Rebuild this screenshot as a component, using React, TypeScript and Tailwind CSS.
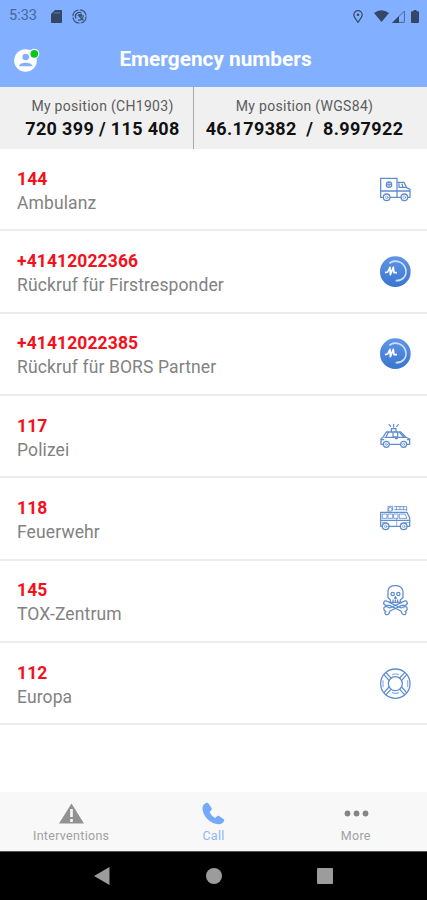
import React from 'react';

// --- Types ---
interface EmergencyNumber {
    number: string;
    label: string;
    icon: React.ReactNode;
}

// --- Icons ---
const lineIcon = {
    className: 'w-8 h-8 shrink-0',
    fill: 'none',
    stroke: '#5f8dd0',
    strokeWidth: 3.8,
    strokeLinejoin: 'round' as const,
    strokeLinecap: 'round' as const,
};

const AmbulanceIcon = () => (
    <svg {...lineIcon} viewBox="27 27 96 96">
        <path d="M40 97H32V40H81V97H61M32 78H120M81 97H94M81 52H102L110 68L120 73V97H113" />
        <path d="M87 56V67H100M96 57L99 67H107" />
        <circle cx="57" cy="59" r="8" />
        <path d="M57 54V64M52 59H62" strokeWidth="3" />
        <circle cx="50" cy="97" r="10" />
        <circle cx="103" cy="97" r="10" />
        <circle cx="50" cy="97" r="4" strokeWidth="2" />
        <circle cx="103" cy="97" r="4" strokeWidth="2" />
    </svg>
);

const CallbackIcon = () => (
    <svg className="w-8 h-8 shrink-0" viewBox="27 34 96 96" fill="none">
        <defs>
            <linearGradient id="callback" x1="0" y1="0" x2="0" y2="1">
                <stop offset="0" stopColor="#6096e4" />
                <stop offset="1" stopColor="#3975d0" />
            </linearGradient>
        </defs>
        <circle cx="76" cy="81" r="46" fill="url(#callback)" />
        <path d="M58 56C75 42 101 51 107 73C112 94 97 109 77 108" stroke="#cfe0fb" strokeWidth="5" />
        <path d="M45 84L53 82L60 68L61 90L70 68L72 84H81" stroke="#fff" strokeWidth="5" strokeLinejoin="round" />
    </svg>
);

const PoliceIcon = () => (
    <svg {...lineIcon} viewBox="27 27 96 96">
        <path d="M38 97H33V80L39 76L49 60H92L107 75L119 81V97H112M59 97H91" />
        <path d="M45 76H107M55 61L48 75M69 61V75H83V61M90 63L101 75" />
        <path d="M64 59V50H78V59M71 45V37M62 43L57 38M80 43L85 38" />
        <path d="M34 83H41M112 83H119M76 80H82" />
        <circle cx="49" cy="97" r="9" />
        <circle cx="101" cy="97" r="9" />
        <circle cx="49" cy="97" r="3" strokeWidth="2" />
        <circle cx="101" cy="97" r="3" strokeWidth="2" />
    </svg>
);

const FireTruckIcon = () => (
    <svg {...lineIcon} viewBox="27 28 96 96">
        <path d="M37 98H32V56H111L119 73V98H112M57 98H91M32 80H120" />
        <path d="M38 61H51V74H38ZM55 61H68V74H55ZM72 61H84V74H72ZM89 61H105L111 74H89Z" strokeWidth="2.5" />
        <path d="M54 55V38H68V50M74 39H109M74 48H109M79 39V48M90 39V48M100 39V48M110 39V51" strokeWidth="2.5" />
        <circle cx="61" cy="47" r="6" strokeWidth="2.5" />
        <path d="M80 75V98M37 87H48M102 87H116" strokeWidth="2" />
        <circle cx="47" cy="98" r="10" />
        <circle cx="101" cy="98" r="10" />
        <circle cx="47" cy="98" r="4" strokeWidth="2" />
        <circle cx="101" cy="98" r="4" strokeWidth="2" />
    </svg>
);

const PoisonIcon = () => (
    <svg {...lineIcon} viewBox="27 32 96 96">
        <path d="M61 76L54 70V50C55 40 63 34 76 34S97 40 99 50V70L91 76V84H61Z" />
        <circle cx="68" cy="59" r="5" />
        <circle cx="85" cy="59" r="5" />
        <path d="M76 67L74 72H79ZM69 77V84M76 77V84M83 77V84" />
        <path d="M53 82C43 74 37 87 45 92C48 95 55 92 58 93L93 110C95 116 98 124 106 120C110 116 108 113 105 111C113 110 114 99 107 97C101 95 98 100 94 101L59 85C58 84 57 81 53 82Z" />
        <path d="M100 82C110 74 116 87 108 92C105 95 98 92 95 93L60 110C58 116 55 124 47 120C43 116 45 113 48 111C40 110 39 99 46 97C52 95 55 100 59 101L94 85C95 84 96 81 100 82Z" />
    </svg>
);

const LifebuoyIcon = () => (
    <svg {...lineIcon} viewBox="27 27 96 96">
        <circle cx="76" cy="74" r="44" />
        <circle cx="76" cy="74" r="21" />
        <path d="M48 41L63 57M42 47L57 64M104 41L89 57M110 47L95 64M48 107L63 91M42 101L57 84M104 107L89 91M110 101L95 84" />
        <path d="M67 47C73 44 80 44 86 47M67 101C73 104 80 104 86 101M39 65V83M113 65V83" stroke="#96b8e8" />
    </svg>
);

const StatusBar = () => (
    <div className="h-8 pl-[9px] pr-[8px] flex items-center text-[#4a6799]">
        <span className="text-[14.5px] leading-none w-[42px]">5:33</span>
        <svg className="w-[11px] h-[13px]" viewBox="0 0 11 13" fill="#344766">
            <path d="M4 0H10Q11 0 11 1V12Q11 13 10 13H1Q0 13 0 12V4Z" />
            <path d="M4 2V4M6 2V4M8 2V4" stroke="#607da9" strokeWidth="1" />
        </svg>
        <svg className="w-[15px] h-[15px] ml-[10px]" viewBox="0 0 15 15" fill="none" stroke="#3c5378">
            <circle cx="7.5" cy="7.5" r="6.6" strokeWidth="1.2" strokeDasharray="9 1.4" />
            <path d="M4 9.5A4 4 0 0 1 9.500 4M11 6A4 4 0 0 1 6 11" strokeWidth="1.3" />
            <path d="M5 6.500L7 5H10V8Z" fill="#3c5378" stroke="none" />
            <path d="M7 7L11.500 11.500" strokeWidth="1.4" />
        </svg>
        <div className="ml-auto flex items-center">
            <svg className="w-[10px] h-[13px]" viewBox="0 0 10 13" fill="none" stroke="#344766" strokeWidth="1.2">
                <path d="M5 12.2C2.5 9 .8 7 .8 4.8A4.2 4.2 0 0 1 9.2 4.8C9.2 7 7.5 9 5 12.2Z" />
                <circle cx="5" cy="4.8" r="1.3" fill="#344766" stroke="none" />
            </svg>
            <svg className="w-[15px] h-[12px] ml-[11px]" viewBox="0 0 15 12" fill="#344766">
                <path d="M0 3Q7.500 -2.600 15 3L7.500 12Z" />
            </svg>
            <svg className="w-[13px] h-[13px] ml-[3px]" viewBox="0 0 13 13">
                <path d="M1 12.400H12.400V1Z" fill="none" stroke="#4c6894" strokeWidth="1" />
                <path d="M0 13L7 6V13Z" fill="#344766" />
            </svg>
            <svg className="w-[8px] h-[13px] ml-[6px]" viewBox="0 0 8 13" fill="#344766">
                <path d="M2.500 0H5.500V1.300H7Q8 1.300 8 2.300V12Q8 13 7 13H1Q0 13 0 12V2.300Q0 1.300 1 1.300H2.500Z" />
            </svg>
        </div>
    </div>
);

const Header = () => (
    <header className="h-[55px] grid grid-cols-[60px_1fr_60px] items-center">
        <svg className="w-[26px] h-[24px] ml-[14px]" viewBox="0 0 26 24">
            <circle cx="11.500" cy="12.500" r="11.300" fill="#fff" />
            <circle cx="11.700" cy="9" r="3.300" fill="#82afff" />
            <path d="M5 18.200C5.500 13.700 18 13.700 18.300 18.200Z" fill="#82afff" />
            <circle cx="20.300" cy="5.800" r="5" fill="#fff" />
            <circle cx="20.300" cy="5.800" r="3.900" fill="#0ac61b" />
        </svg>
        <h1 className="text-white font-bold text-[20.8px] leading-none text-center whitespace-nowrap pl-[4px]">Emergency numbers</h1>
    </header>
);

const Position = ({ title, value }: { title: string; value: string }) => (
    <div className="flex flex-col items-center pt-[10px] whitespace-pre">
        <span className="text-[14px] leading-[19px] tracking-[0.3px] text-[#5c5c5c]">{title}</span>
        <span className="text-[18px] leading-[25px] tracking-[0.35px] font-bold text-[#111]">{value}</span>
    </div>
);

const NUMBERS: EmergencyNumber[] = [
    { number: '144', label: 'Ambulanz', icon: <AmbulanceIcon /> },
    { number: '+41412022366', label: 'Rückruf für Firstresponder', icon: <CallbackIcon /> },
    { number: '+41412022385', label: 'Rückruf für BORS Partner', icon: <CallbackIcon /> },
    { number: '117', label: 'Polizei', icon: <PoliceIcon /> },
    { number: '118', label: 'Feuerwehr', icon: <FireTruckIcon /> },
    { number: '145', label: 'TOX-Zentrum', icon: <PoisonIcon /> },
    { number: '112', label: 'Europa', icon: <LifebuoyIcon /> },
];

const TabBar = () => (
    <nav className="h-[59px] bg-[#f8f8f8] grid grid-cols-3 text-[12.5px] leading-[18px] tracking-[0.3px] text-[#a0a0a0]">
        <div className="flex flex-col items-center pt-[9px]">
            <svg className="w-[26px] h-[26px]" viewBox="0 0 26 26">
                <path d="M13.500 2.500L26 22.500H1Z" fill="#929292" />
                <path d="M13.500 8V16M13.500 18V21" stroke="#f8f8f8" strokeWidth="2.600" />
            </svg>
            <span>Interventions</span>
        </div>
        <div className="flex flex-col items-center pt-[9px] text-[#8fb5fc]">
            <svg className="w-[26px] h-[26px]" viewBox="0 0 26 26" fill="#74a9fb">
                <path d="M6 1.900C4.400 2.400 2.600 4.300 2.500 7C2.400 15 10.400 23 18.400 23.300C21 23.400 23.700 21.400 24.200 19.700C24.400 18.900 24.100 18.300 23.400 17.900L19.200 14.900C18.400 14.500 17.700 14.600 17.100 15.200L15.100 17C12.400 15.600 10.800 13.600 9.600 11L11.300 8.900C11.900 8.300 12 7.600 11.600 6.900L8.500 2.600C7.900 1.700 7 1.600 6 1.900Z" />
            </svg>
            <span>Call</span>
        </div>
        <div className="flex flex-col items-center pt-[9px]">
            <svg className="w-[26px] h-[26px]" viewBox="0 0 26 26" fill="#858585">
                <circle cx="4.500" cy="12.500" r="2.900" />
                <circle cx="13.500" cy="12.500" r="2.900" />
                <circle cx="22.500" cy="12.500" r="2.900" />
            </svg>
            <span>More</span>
        </div>
    </nav>
);

const SystemNav = () => (
    <div className="h-[49px] bg-black border-t border-[#555] grid grid-cols-[204px_20px_1fr] items-center text-[#9c9c9c]">
        <svg className="w-[16px] h-[18px] ml-[94px]" viewBox="0 0 16 18" fill="currentColor">
            <path d="M0 9L15.500 0V18Z" />
        </svg>
        <div className="w-4 h-4 rounded-full bg-[#9c9c9c] justify-self-center" />
        <div className="w-4 h-4 rounded-[1px] bg-[#9c9c9c] ml-[93px]" />
    </div>
);

export default function App() {
    return (
        <div className="w-full h-[900px] flex flex-col bg-white overflow-hidden font-['Roboto',sans-serif]">
            <div className="bg-[#82afff] shrink-0">
                <StatusBar />
                <Header />
            </div>

            {/* Current position in both coordinate systems */}
            <section className="h-[62px] shrink-0 bg-[#f0f0f0] grid grid-cols-[194px_1fr]">
                <div className="border-r border-[#aaa] pl-[12px]">
                    <Position title="My position (CH1903)" value="720 399 / 115 408" />
                </div>
                <div className="pr-[12px]">
                    <Position title="My position (WGS84)" value="46.179382  /  8.997922" />
                </div>
            </section>

            <ul className="flex-1">
                {NUMBERS.map((entry) => (
                    <li
                        key={entry.number}
                        className="h-[82.35px] border-b-2 border-[#ececec] flex items-center justify-between pl-[17px] pr-4 pt-px"
                    >
                        <div className="pt-[2px]">
                            <p className="text-[17.5px] leading-[24px] tracking-[0.1px] font-bold text-[#f5101b]">{entry.number}</p>
                            <p className="text-[17.5px] leading-[24px] tracking-[0.12px] text-[#828282]">{entry.label}</p>
                        </div>
                        {entry.icon}
                    </li>
                ))}
            </ul>

            <TabBar />
            <SystemNav />
        </div>
    );
}
